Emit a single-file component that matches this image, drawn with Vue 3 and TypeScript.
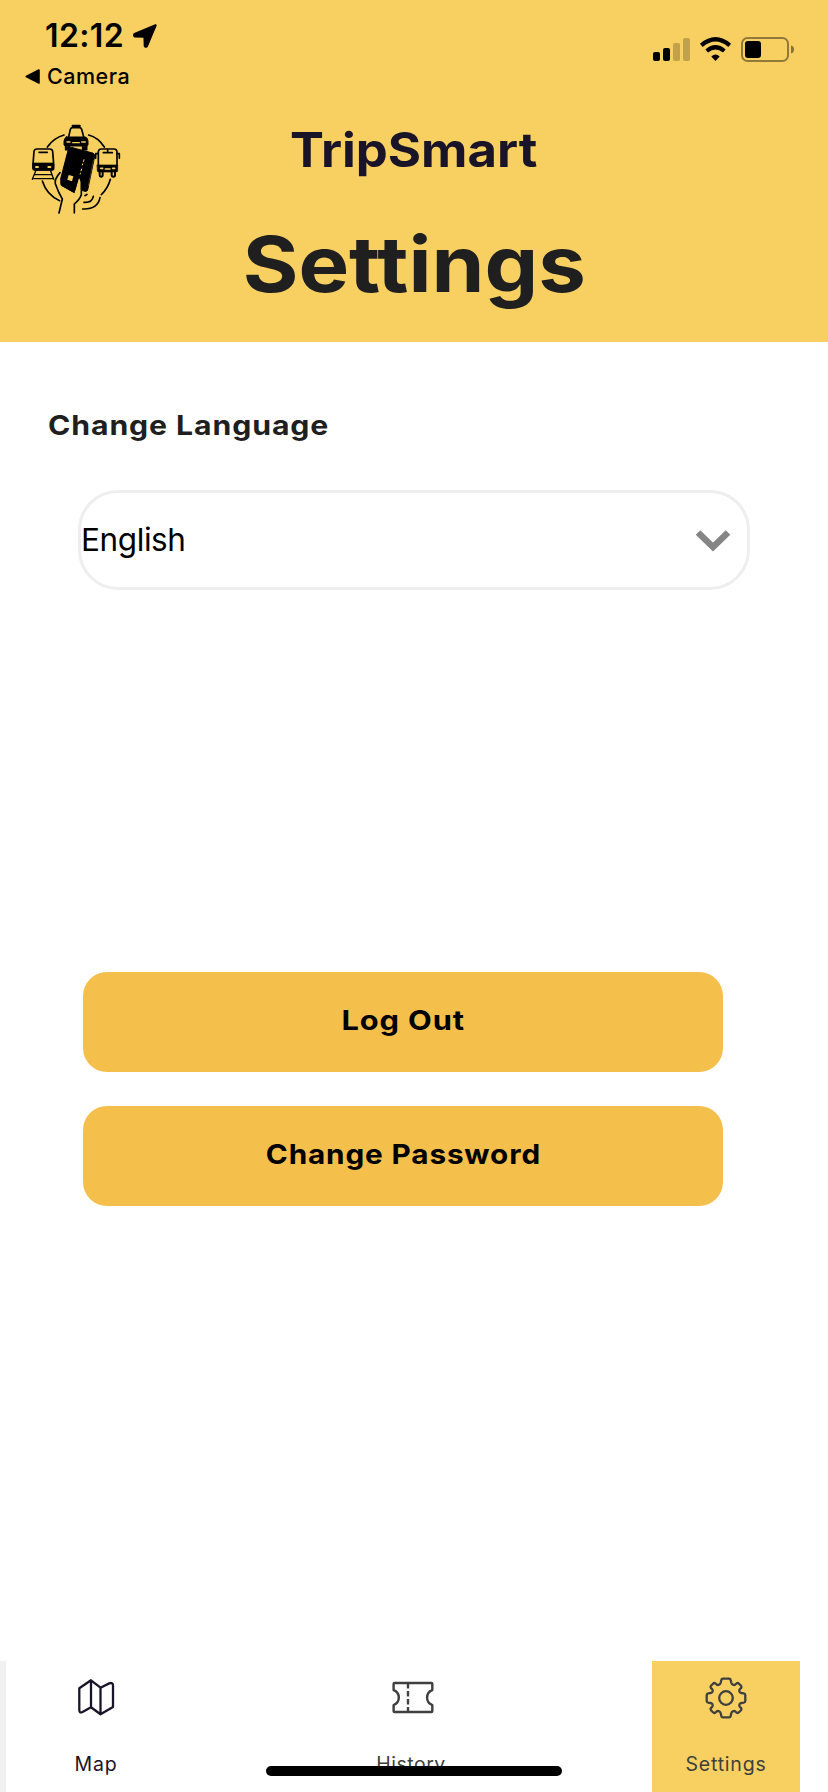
<script setup lang="ts">
import { ref } from 'vue'

type Tab = 'map' | 'history' | 'settings'

const language = ref('English')
const activeTab = ref<Tab>('settings')
const actions = [
  { id: 'logout', label: 'Log Out' },
  { id: 'password', label: 'Change Password' },
]
</script>

<template>
  <div class="screen">
    <header class="header">
      <div class="status">
        <div class="status-left">
          <div class="clock">
            <span class="time">12:12</span>
            <svg class="location" viewBox="0 0 24 24">
              <path d="M22.6 1.3 13.8 22.2Q12.6 23.4 11.8 22L11.5 12.7 1.8 12.3Q.4 11.3 1.6 10.1Z" fill="#000" stroke="#000" stroke-width="2.2" stroke-linejoin="round" />
            </svg>
          </div>
          <div class="back">
            <svg class="back-arrow" viewBox="0 0 14 14">
              <path d="M13 1v12L1.2 7Z" fill="#000" stroke="#000" stroke-width="1.6" stroke-linejoin="round" />
            </svg>
            <span class="camera">Camera</span>
          </div>
        </div>
        <svg class="indicators" viewBox="0 0 144 26">
          <g>
            <rect x="0" y="15" width="7" height="9" rx="2" />
            <rect x="10" y="11" width="7" height="13" rx="2" />
            <g opacity=".22">
              <rect x="20" y="6" width="7" height="18" rx="2" />
              <rect x="30" y="1" width="7" height="23" rx="2" />
            </g>
          </g>
          <g fill="none" stroke="#000" stroke-width="4.2">
            <path d="M48.3 8.4Q62.5-3.8 76.7 8.4" />
            <path d="M53.7 14Q62.5 6.6 71.3 14" />
          </g>
          <path d="M58.3 19.4Q62.5 15.8 66.7 19.4L62.5 24Z" />
          <rect x="89" y="1" width="46" height="23" rx="5.5" fill="none" stroke="#000" stroke-opacity=".42" stroke-width="2" />
          <rect x="92" y="4" width="16" height="17" rx="3" />
          <path d="M138 8.5v8q3-.7 3-4t-3-4Z" opacity=".45" />
        </svg>
      </div>

      <svg class="logo" viewBox="0 0 330 330" fill="none" stroke="#000" stroke-width="5" stroke-linecap="round" stroke-linejoin="round">
        <path d="M82 96Q101 69 132 60M206 60Q234 67 253 96M67 198Q80 240 119 257M271 193Q264 220 244 239" stroke-width="5" />
        <!-- taxi -->
        <path d="M146 66 151 43Q153 38 158 38H178Q183 38 185 43L191 66" />
        <path d="M158 33H179" stroke-width="7" />
        <path d="M139 66H197Q204 70 204 79V89Q204 93 198 93H138Q132 93 132 89V79Q132 70 139 66Z" fill="#000" stroke-width="3" />
        <path d="M137 94V104H148V94M188 94V104H200V94" fill="#000" />
        <path d="M141 81H150M185 81H196M158 83H178" stroke="#f8d062" stroke-width="4" />
        <!-- train -->
        <path d="M39 148 42 109Q43 102 51 102H89Q97 102 98 109L101 148V160Q101 165 95 165H45Q39 165 39 160Z" />
        <path d="M39 144H101V160Q101 166 95 166H45Q39 166 39 160Z" fill="#000" stroke-width="2" />
        <path d="M57 112H82" />
        <path d="M48 156H54M85 156H91" stroke="#f8d062" stroke-width="6" />
        <path d="M47 168 37 193M92 168 101 193M46 179H94M42 191H98" stroke-width="4" />
        <!-- bus -->
        <path d="M235 153V110Q236 102 244 102H282Q290 102 291 110V153" />
        <path d="M232 150H293V167Q293 171 288 171H237Q232 171 232 167Z" fill="#000" stroke-width="2" />
        <path d="M263 103V112M250 113H277M234 116H227V130M291 116H298V130" />
        <path d="M242 160H248M278 160H284M256 162H270" stroke="#f8d062" stroke-width="5" />
        <path d="M239 171V181Q239 185 243 185Q248 185 248 181V171M275 171V181Q275 185 280 185Q285 185 285 181V171" stroke-width="6" />
        <!-- cards -->
        <path d="M157 98 218 114Q225 117 224 124L203 225Q201 230 195 229L182 225 164 235 123 213Q118 209 119 203L145 103Q149 96 157 98Z" fill="#000" stroke-width="3" />
        <path d="M146 180 160 184 156 199 142 194Z" fill="#f8d062" stroke="none" />
        <path d="M192 134 187 150M185 162 180 178" stroke="#f8d062" stroke-width="3" stroke-dasharray="6 7" />
        <path d="M220 136 205 212" stroke="#f8d062" stroke-width="2" stroke-opacity=".35" />
        <!-- hand -->
        <path d="M163 294V267Q180 252 184 239V201Q182 181 174 190L163 235 122 211 119 178Q104 194 106 206Q116 234 127 252L117 294Z" fill="#f8d062" stroke="none" />
        <path d="M146 110 123 195Q119 208 126 214L163 234 180 172 170 120Z" fill="#000" stroke="none" />
        <path d="M146 180 160 184 156 199 142 194Z" fill="#f8d062" stroke="none" />
        <path d="M163 294V267Q180 252 184 239V201Q181 183 174 190L164 225M120 173Q102 194 106 206Q116 234 127 252L117 294" />
        <path d="M195 242Q199 241 201 238M192 262Q216 264 220 244M188 282Q233 284 240 248" />
      </svg>

      <div class="brand"><span>TripSmart</span></div>
      <h1 class="title"><span>Settings</span></h1>
    </header>

    <main class="content">
      <h2 class="label"><span>Change Language</span></h2>
      <button class="select" type="button">
        <span class="value">{{ language }}</span>
        <svg class="chevron" viewBox="0 0 36 24">
          <path d="M3 4.5 18 19 33 4.5" fill="none" stroke="#858585" stroke-width="6.5" />
        </svg>
      </button>
      <div class="actions">
        <button v-for="action in actions" :key="action.id" type="button" class="action">
          <span :class="action.id">{{ action.label }}</span>
        </button>
      </div>
    </main>

    <nav class="tabs">
      <button class="tab map" type="button" :class="{ active: activeTab === 'map' }" @click="activeTab = 'map'">
        <svg viewBox="0 0 42 42" fill="none" stroke="currentColor" stroke-width="2.3" stroke-linejoin="round">
          <path d="M4.3 11.2 16 3.3 25.5 10.7 34.2 6.4Q38 5 38 8.5V30L25.5 37.3 16 30.3 7.5 35Q4.3 36.5 4.3 33ZM16 3.3V30.3M25.5 10.7V37.3" />
        </svg>
        <span>Map</span>
      </button>
      <button class="tab history" type="button" :class="{ active: activeTab === 'history' }" @click="activeTab = 'history'">
        <svg viewBox="0 0 42 42" fill="none" stroke="currentColor" stroke-width="2.4" stroke-linejoin="round">
          <path d="M2.500 6H39.500Q40.300 6 40.300 7V13A8 8 0 0 0 40.300 28V34Q40.300 35 39.500 35H2.500Q1.600 35 1.600 34V28A8 8 0 0 0 1.600 13V7Q1.600 6 2.500 6Z" />
          <path d="M16 6V35" stroke-dasharray="5.500 2.500" />
        </svg>
        <span>History</span>
      </button>
      <button class="tab settings" type="button" :class="{ active: activeTab === 'settings' }" @click="activeTab = 'settings'">
        <svg viewBox="-21 -21 42 42" fill="none" stroke="currentColor" stroke-width="2.3" stroke-linejoin="round">
          <circle r="6.8" />
          <path d="M-4.7-18Q-4.5-19.3-3-19.3H3Q4.500-19.3 4.700-18L5.300-15.200Q5.700-13.800 7-13.200Q8.300-12.700 9.400-13.500L10.500-14.500Q11.800-15.500 13-14.300L15-12.300Q16-11 15-9.800L13.800-8.800Q12.900-7.500 13.500-6.300Q14-5.300 15.500-5L17.800-4.600Q19.300-4.300 19.300-3V3Q19.300 4.300 17.800 4.600L15.500 5Q14 5.300 13.500 6.300Q12.900 7.500 13.800 8.800L15 9.800Q16 11 15 12.300L13 14.300Q11.800 15.500 10.500 14.500L9.400 13.500Q8.300 12.700 7 13.200Q5.700 13.800 5.300 15.200L4.700 18Q4.500 19.300 3 19.300H-3Q-4.500 19.300-4.700 18L-5.300 15.200Q-5.700 13.800-7 13.200Q-8.300 12.700-9.400 13.500L-10.500 14.500Q-11.800 15.500-13 14.300L-15 12.300Q-16 11-15 9.800L-13.800 8.800Q-12.900 7.500-13.500 6.300Q-14 5.300-15.500 5L-17.800 4.600Q-19.300 4.300-19.300 3V-3Q-19.300-4.300-17.800-4.600L-15.500-5Q-14-5.300-13.500-6.300Q-12.900-7.500-13.800-8.800L-15-9.800Q-16-11-15-12.300L-13-14.300Q-11.800-15.500-10.500-14.500L-9.400-13.500Q-8.300-12.700-7-13.200Q-5.700-13.800-5.300-15.200Z" />
        </svg>
        <span>Settings</span>
      </button>
      <div class="home-indicator"></div>
    </nav>
  </div>
</template>

<style>
body {
  background: #fff;
}
</style>

<style scoped>
.screen {
  width: 828px;
  height: 1792px;
  display: flex;
  flex-direction: column;
  overflow: hidden;
  background: #fff;
  font-family: Inter, "Liberation Sans", sans-serif;
  color: #000;
}
.screen * {
  box-sizing: border-box;
}
button {
  border: 0;
  padding: 0;
  background: none;
  font: inherit;
  color: inherit;
}
span {
  display: inline-block;
  white-space: nowrap;
}
.header {
  position: relative;
  height: 342px;
  flex: none;
  background: #f8d062;
}
.status {
  height: 115px;
  display: flex;
  justify-content: space-between;
  padding: 16px 31px 0 25px;
}
.clock {
  height: 40px;
  display: flex;
  align-items: center;
  padding-left: 20px;
}
.time {
  width: 88px;
  font-size: 32px;
  font-weight: 600;
  line-height: 40px;
  letter-spacing: 0.4px;
}
.location {
  width: 24px;
  height: 24px;
}
.back {
  height: 40px;
  display: flex;
  align-items: center;
}
.back-arrow {
  width: 15px;
  height: 15px;
  margin-right: 7px;
}
.camera {
  font-size: 21.5px;
  font-weight: 500;
  letter-spacing: 0.5px;
}
.indicators {
  width: 144px;
  height: 26px;
  margin-top: 21px;
}
.logo {
  position: absolute;
  left: 20px;
  top: 115px;
  width: 110px;
  height: 110px;
}
.brand {
  height: 70px;
  text-align: center;
  font-size: 47.5px;
  font-weight: 700;
  line-height: 70px;
  color: #1a1428;
}
.brand span {
  transform: scaleX(1.07);
}
.title {
  margin: 0;
  padding-top: 29px;
  text-align: center;
  font-size: 77px;
  font-weight: 700;
  line-height: 100px;
  color: #1f1f1f;
}
.title span {
  transform: scaleX(1.105);
}
.content {
  flex: 1;
  padding: 63px 78px 0;
}
.label {
  margin: 0 0 45px -30px;
  font-size: 27.5px;
  font-weight: 700;
  line-height: 40px;
  letter-spacing: 0.8px;
  color: #1f1f1f;
}
.label span {
  transform: scaleX(1.1);
  transform-origin: left;
}
.select {
  display: flex;
  align-items: center;
  justify-content: space-between;
  width: 672px;
  height: 100px;
  padding: 0 16px 0 0;
  border: 3px solid #eee;
  border-radius: 40px;
  font-size: 31.5px;
}
.value {
  padding-bottom: 2px;
  letter-spacing: -0.4px;
}
.chevron {
  width: 36px;
  height: 24px;
}
.actions {
  display: flex;
  flex-direction: column;
  gap: 34px;
  width: 640px;
  margin: 382px 0 0 5px;
}
.action {
  height: 100px;
  padding-bottom: 4px;
  border-radius: 24px;
  background: #f5bf4c;
  font-size: 27.5px;
  font-weight: 700;
  letter-spacing: 0.8px;
}
.action span {
  transform: scaleX(1.08);
}
.action .logout {
  transform: scaleX(1.12);
}
.tabs {
  position: relative;
  display: flex;
  justify-content: space-between;
  height: 131px;
  flex: none;
  padding-right: 28px;
  border-left: 6px solid #f1f1f1;
}
.tab {
  display: flex;
  flex-direction: column;
  align-items: center;
  width: 148px;
  padding-top: 16px;
  font-size: 19.5px;
  letter-spacing: 0.8px;
  line-height: 26px;
  color: #3f3f3f;
}
.tab svg {
  width: 42px;
  height: 42px;
  margin-bottom: 32px;
}
.tab.map {
  width: 180px;
  color: #1a1428;
}
.tab.history {
  margin-left: -12px;
  letter-spacing: 0.5px;
}
.tab.history span {
  margin-left: -4px;
}
.tab.active {
  background: #f8d062;
}
.home-indicator {
  position: absolute;
  left: 260px;
  bottom: 16px;
  width: 296px;
  height: 10px;
  border-radius: 5px;
  background: #000;
}
</style>
